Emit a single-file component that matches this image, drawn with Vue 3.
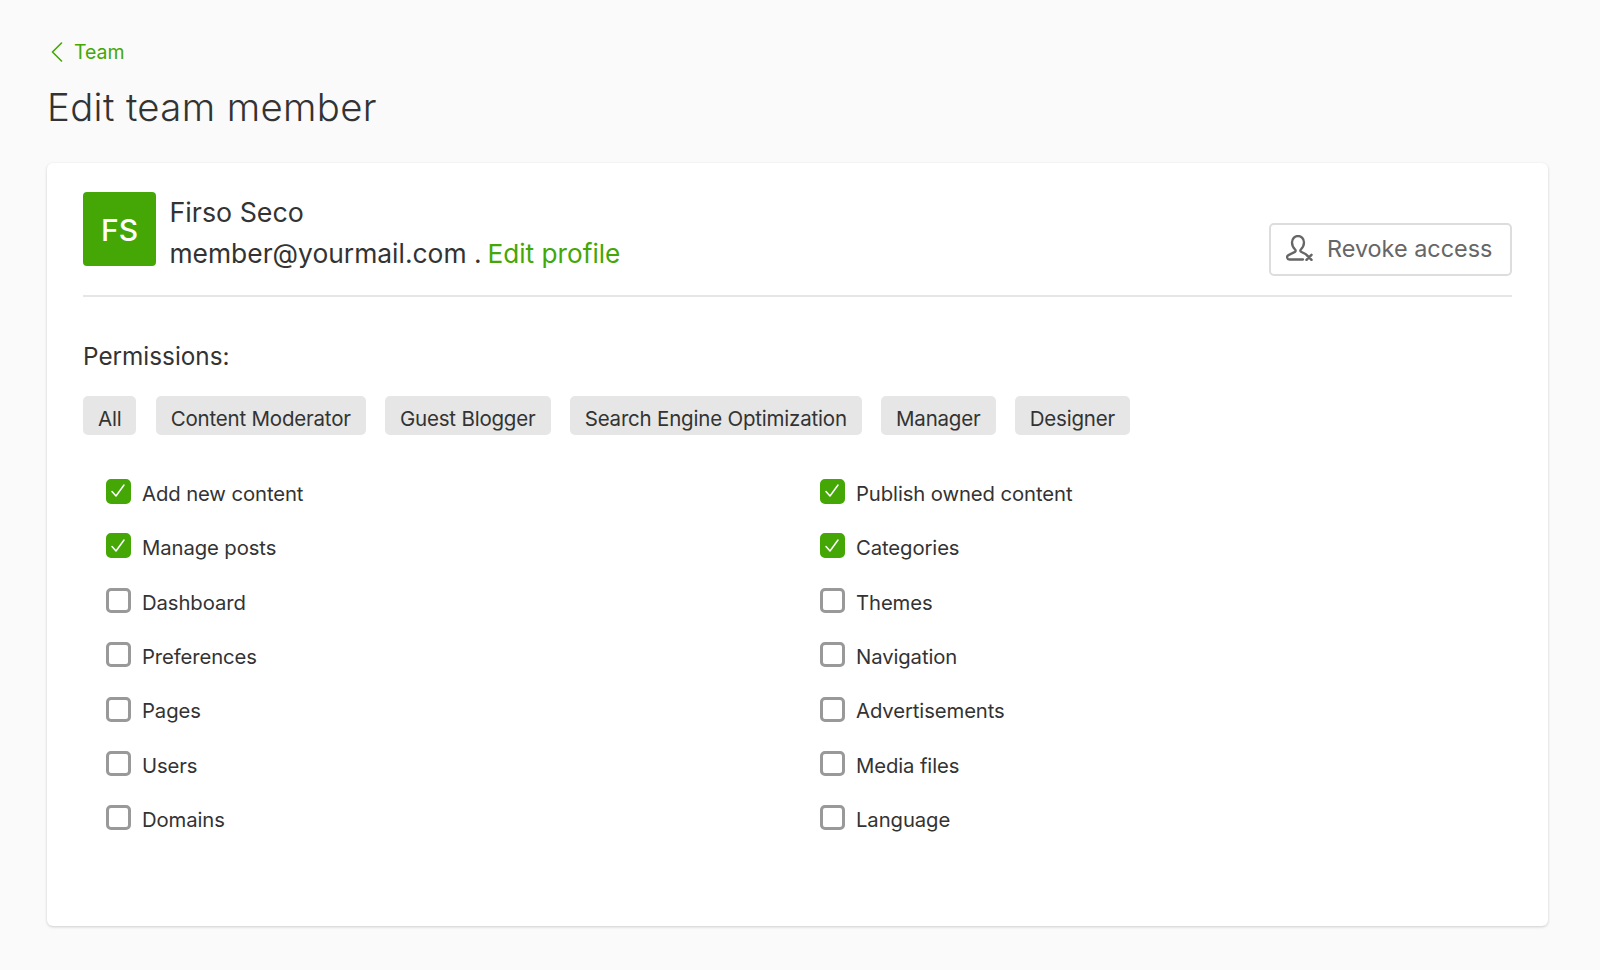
<script setup>
const chips = ['All', 'Content Moderator', 'Guest Blogger', 'Search Engine Optimization', 'Manager', 'Designer']
const perms = [
  ['Add new content', true], ['Publish owned content', true],
  ['Manage posts', true], ['Categories', true],
  ['Dashboard', false], ['Themes', false],
  ['Preferences', false], ['Navigation', false],
  ['Pages', false], ['Advertisements', false],
  ['Users', false], ['Media files', false],
  ['Domains', false], ['Language', false],
]
</script>

<template>
  <div class="page">
    <a class="back">
      <svg class="chev" width="14" height="20" viewBox="0 0 14 20"><path d="M11.5 1 2.5 10l9 9" fill="none" stroke="#44a706" stroke-width="1.6" stroke-linecap="round" stroke-linejoin="round"/></svg>
      <span>Team</span>
    </a>
    <h1 class="title">Edit team member</h1>
    <section class="card">
      <header class="head">
        <div class="avatar">FS</div>
        <div class="who">
          <div class="name">Firso Seco</div>
          <div class="mail">member@yourmail.com . <a class="edit">Edit profile</a></div>
        </div>
        <button class="revoke">
          <svg class="revoke-icon" width="27" height="26" viewBox="0 0 27 26" fill="none" stroke="#666" stroke-width="2.3" stroke-linecap="round" stroke-linejoin="round">
            <path d="M17 24.5H3.5a2.3 2.3 0 0 1-1-4.4l6.5-3.2c.8-.4.9-1.4.3-2.1C7.2 12.7 6 10 6 7.5 6 3.8 8.6 1 12 1s6 2.8 6 6.5c0 2.5-1.2 5-3.3 7.2-.6.7-.5 1.7.3 2.1l4.5 2.2"/>
            <path d="M20.5 19.8l5 5M25.5 19.8l-5 5" stroke-width="2.5"/>
          </svg>
          <span class="revoke-text">Revoke access</span>
        </button>
      </header>
      <h2 class="perm-title">Permissions:</h2>
      <div class="chips">
        <span v-for="c in chips" :key="c" class="chip">{{ c }}</span>
      </div>
      <div class="grid">
        <label v-for="p in perms" :key="p[0]" class="row">
          <span class="box" :class="{ on: p[1] }">
            <svg v-if="p[1]" width="16" height="16" viewBox="0 0 16 16"><path d="M2 8.5 6 13 14 2" fill="none" stroke="#fff" stroke-width="1.5" stroke-linecap="round" stroke-linejoin="round"/></svg>
          </span>
          <span class="lbl">{{ p[0] }}</span>
        </label>
      </div>
    </section>
  </div>
</template>

<style>
html, body { margin: 0; background: #fafafa; }
</style>

<style scoped>
.page {
  box-sizing: border-box;
  height: 970px;
  padding: 40px 52px 43px 47px;
  background: #fafafa;
  font-family: Inter, "Liberation Sans", sans-serif;
  color: #333;
  overflow: hidden;
}
.back {
  display: flex;
  align-items: center;
  gap: 10px;
  height: 24px;
  padding-left: 3px;
  color: #44a706;
  font-size: 19.5px;
}
.title {
  margin: 18px 0 0;
  font-size: 38.3px;
  line-height: 50px;
  font-weight: 300;
  letter-spacing: .38px;
  color: #333;
}
.card {
  box-sizing: border-box;
  height: 763px;
  margin-top: 31px;
  padding: 29px 36px 0;
  background: #fff;
  border-radius: 6px;
  box-shadow: 0 1px 3px rgba(0, 0, 0, .18);
}
.head {
  display: flex;
  height: 83px;
  padding-bottom: 20px;
  border-bottom: 2px solid #e6e6e6;
}
.avatar {
  width: 73px;
  height: 74px;
  border-radius: 4px;
  background: #44a706;
  color: #fff;
  font-size: 30px;
  font-weight: 500;
  display: flex;
  align-items: center;
  justify-content: center;
  padding-top: 1px;
  box-sizing: border-box;
}
.who { margin-left: 13.5px; flex: 1; }
.name { font-size: 26.8px; line-height: 40px; }
.mail { font-size: 26.4px; line-height: 42px; }
.edit { color: #44a706; font-size: 26.2px; margin-left: -1.5px; }
.revoke {
  box-sizing: border-box;
  align-self: flex-end;
  width: 243px;
  height: 53px;
  margin-bottom: -1px;
  display: flex;
  align-items: center;
  gap: 14px;
  padding: 0 0 0 15px;
  background: #fff;
  border: 2px solid #ddd;
  border-radius: 5px;
  color: #666;
  font: inherit;
  font-size: 23.4px;
}
.revoke-icon { margin-top: -3px; }
.revoke-text { margin-top: -2px; }
.perm-title {
  margin: 41px 0 0;
  font-size: 24.3px;
  line-height: 36px;
  font-weight: 400;
}
.chips {
  display: flex;
  gap: 19.2px;
  margin-top: 22px;
}
.chip {
  padding: 0 15px;
  height: 39px;
  line-height: 45px;
  background: #e6e6e6;
  border-radius: 5px;
  font-size: 20.5px;
  letter-spacing: -0.2px;
}
.grid {
  display: grid;
  grid-template-columns: 714px 714px;
  grid-auto-rows: 54.4px;
  margin-top: 30.8px;
  padding-left: 22.5px;
}
.row {
  display: flex;
  align-items: center;
  gap: 11.5px;
  font-size: 20.3px;
  letter-spacing: -0.1px;
}
.box {
  box-sizing: border-box;
  width: 25px;
  height: 25px;
  border: 3px solid #999;
  border-radius: 5px;
  display: flex;
  align-items: center;
  justify-content: center;
  margin-top: -3px;
}
.box.on { background: #44a706; border-color: #44a706; }
.lbl { line-height: 26px; margin-top: 1.5px; }
</style>
